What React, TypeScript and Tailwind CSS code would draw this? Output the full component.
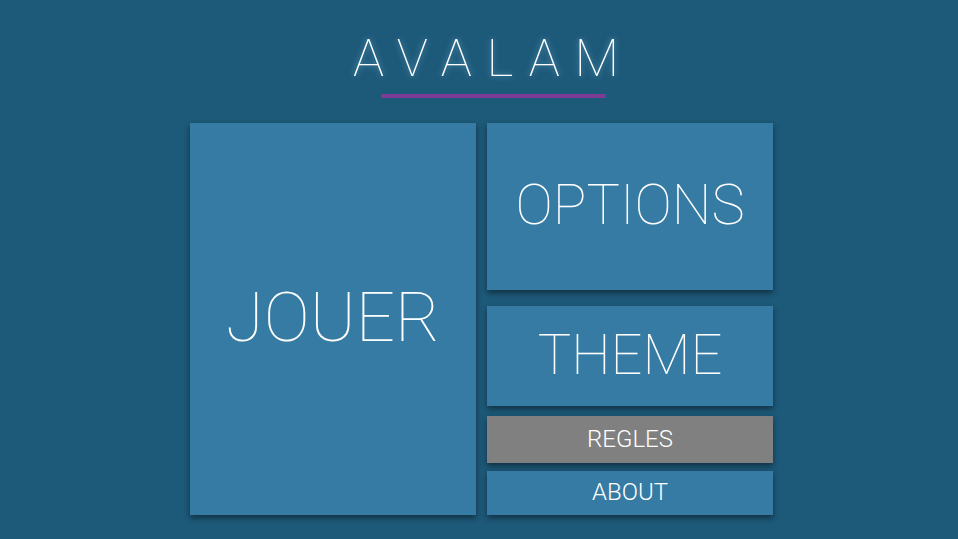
export default function App() {
  const tile =
    "flex items-center justify-center bg-[#367ba3] text-white shadow-[0_3px_6px_rgba(0,0,0,0.45)]";
  return (
    <div
      className="h-[539px] w-[958px] overflow-hidden bg-[#1d5979]"
      style={{ fontFamily: "Roboto, 'Liberation Sans', sans-serif" }}
    >
      <div className="flex flex-col items-center pt-[33px] pl-[29px]">
        <h1 className="text-[52px] font-thin leading-none tracking-[0.285em] text-white [text-shadow:0_0_6px_rgba(160,220,255,0.6)]">
          AVALAM
        </h1>
      </div>
      <div className="ml-[381px] mt-[9px] h-[4px] w-[225px] bg-[#7b3b96]" />
      <div className="ml-[190px] mt-[25px] flex gap-[11px]">
        <div className={`${tile} h-[392px] w-[286px] pb-[2px] text-[69px] font-thin`}>JOUER</div>
        <div className="flex w-[286px] flex-col">
          <div className={`${tile} h-[167px] pb-[3px] text-[56px] font-thin`}>OPTIONS</div>
          <div className={`${tile} mt-[16px] h-[100px] pb-[2px] text-[56px] font-thin`}>THEME</div>
          <div className={`${tile} mt-[10px] h-[47px] !bg-[#808080] pb-[2px] text-[24px] font-light`}>REGLES</div>
          <div className={`${tile} mt-[8px] h-[44px] pb-[2px] text-[24px] font-light`}>ABOUT</div>
        </div>
      </div>
    </div>
  );
}
